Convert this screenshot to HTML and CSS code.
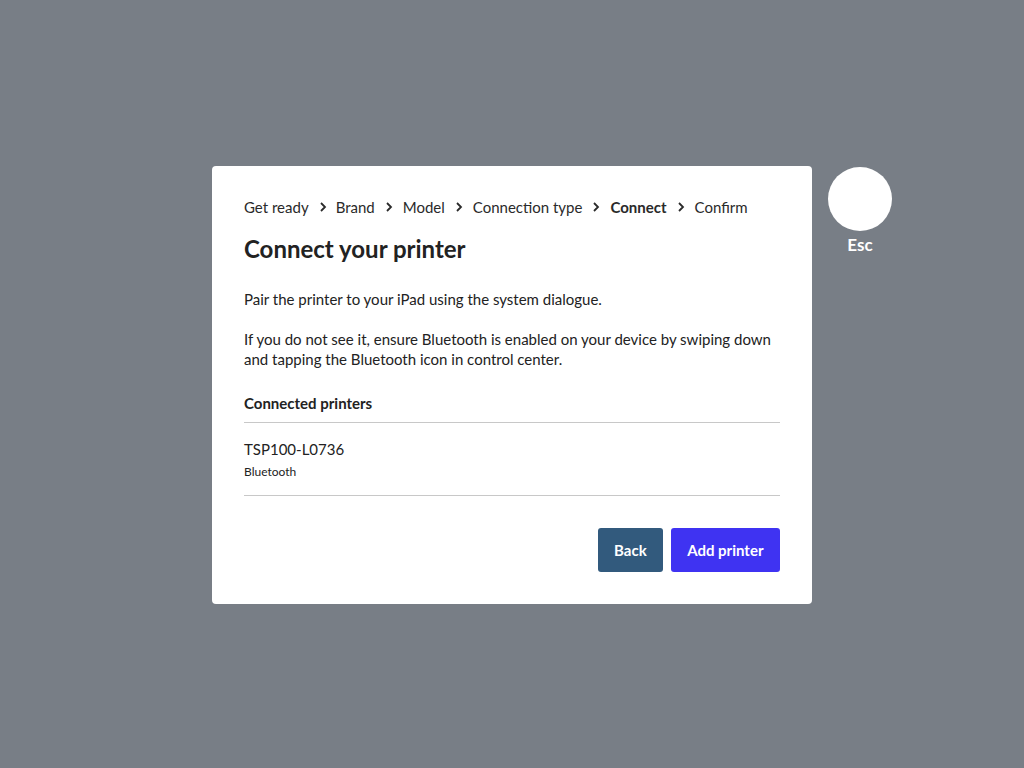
FILE: index.html
```html
<!DOCTYPE html>
<html>
<head>
<meta charset="utf-8">
<link rel="stylesheet" href="styles.css">
</head>
<body>
<div class="overlay">
  <div class="modal-wrap">
    <div class="modal">
      <nav class="crumbs">
        <span class="crumb">Get ready</span>
        <svg class="chev" viewBox="0 0 8 12"><path d="M2 2l4 4-4 4"/></svg>
        <span class="crumb">Brand</span>
        <svg class="chev" viewBox="0 0 8 12"><path d="M2 2l4 4-4 4"/></svg>
        <span class="crumb">Model</span>
        <svg class="chev" viewBox="0 0 8 12"><path d="M2 2l4 4-4 4"/></svg>
        <span class="crumb">Connection type</span>
        <svg class="chev" viewBox="0 0 8 12"><path d="M2 2l4 4-4 4"/></svg>
        <span class="crumb current">Connect</span>
        <svg class="chev" viewBox="0 0 8 12"><path d="M2 2l4 4-4 4"/></svg>
        <span class="crumb">Confirm</span>
      </nav>
      <h1 class="title">Connect your printer</h1>
      <p class="text">Pair the printer to your iPad using the system dialogue.</p>
      <p class="text">If you do not see it, ensure Bluetooth is enabled on your device by swiping down and tapping the Bluetooth icon in control center.</p>
      <div class="section-label">Connected printers</div>
      <div class="printer">
        <div class="printer-name">TSP100-L0736</div>
        <div class="printer-type">Bluetooth</div>
      </div>
      <div class="actions">
        <button class="btn btn-back">Back</button>
        <button class="btn btn-primary">Add printer</button>
      </div>
    </div>
    <div class="esc">
      <div class="esc-circle"></div>
      <div class="esc-label">Esc</div>
    </div>
  </div>
</div>
</body>
</html>
```
FILE: styles.css
```css
* { box-sizing: border-box; }
html, body { margin: 0; padding: 0; }
body {
  font-family: Lato, "Noto Sans", sans-serif;
  background: #787e86;
  color: #222;
}
.overlay {
  width: 1024px;
  height: 768px;
  padding-top: 166px;
  padding-left: 212px;
}
.modal-wrap {
  display: flex;
  align-items: flex-start;
  gap: 16px;
}
.modal {
  width: 600px;
  background: #fff;
  border-radius: 4px;
  padding: 32px;
}
.crumbs {
  display: flex;
  align-items: center;
  font-size: 15px;
  line-height: 18px;
  color: #2a2a2a;
}
.chev {
  width: 8px;
  height: 12px;
  margin: 0 9px 0 10px;
  fill: none;
  stroke: #2a2a2a;
  stroke-width: 1.8;
}
.crumb + .chev + .crumb ~ .chev { margin-right: 10px; }
.crumb.current { font-weight: 700; }
.title {
  margin: 17px 0 0;
  font-size: 24px;
  line-height: 32px;
  font-weight: 700;
  color: #222;
}
.text {
  margin: 20px 0 0;
  font-size: 15px;
  line-height: 20px;
  color: #222;
}
.title + .text { margin-top: 24px; }
.section-label {
  margin-top: 24px;
  font-size: 15px;
  line-height: 20px;
  font-weight: 700;
  padding-bottom: 9px;
  border-bottom: 1px solid #c8c8c8;
}
.printer {
  padding: 15px 0 15px;
  border-bottom: 1px solid #c8c8c8;
}
.printer-name {
  font-size: 15px;
  line-height: 22px;
}
.printer-type {
  margin-top: 4px;
  font-size: 12px;
  line-height: 16px;
}
.actions {
  margin-top: 32px;
  display: flex;
  justify-content: flex-end;
  gap: 8px;
}
.btn {
  height: 44px;
  border: none;
  border-radius: 3px;
  color: #fff;
  font-family: Lato, "Noto Sans", sans-serif;
  font-size: 15px;
  font-weight: 700;
  padding: 0 16px;
}
.btn-back { background: #325a7d; }
.btn-primary { background: #3f33f2; padding: 0 16.5px; }
.esc {
  display: flex;
  flex-direction: column;
  align-items: center;
}
.esc-circle {
  width: 64px;
  height: 64px;
  border-radius: 50%;
  background: #fff;
  margin-top: 1px;
}
.esc-label {
  margin-top: 4px;
  color: #fff;
  font-size: 17px;
  font-weight: 700;
  line-height: 20px;
}
```
